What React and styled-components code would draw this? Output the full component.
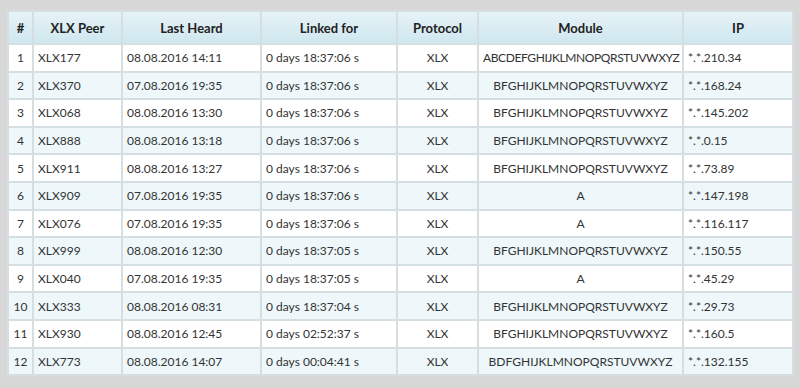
import React from "react";
import styled, { createGlobalStyle } from "styled-components";

const GlobalStyle = createGlobalStyle`
  html, body {
    margin: 0;
    padding: 0;
    background: #d7d7d7;
  }
  body {
    font-family: Lato, "Open Sans", "Liberation Sans", sans-serif;
    color: #333;
  }
`;

const peers = [
  ["XLX177", "08.08.2016 14:11", "0 days 18:37:06 s", "XLX", "ABCDEFGHIJKLMNOPQRSTUVWXYZ", "*.*.210.34"],
  ["XLX370", "07.08.2016 19:35", "0 days 18:37:06 s", "XLX", "BFGHIJKLMNOPQRSTUVWXYZ", "*.*.168.24"],
  ["XLX068", "08.08.2016 13:30", "0 days 18:37:06 s", "XLX", "BFGHIJKLMNOPQRSTUVWXYZ", "*.*.145.202"],
  ["XLX888", "08.08.2016 13:18", "0 days 18:37:06 s", "XLX", "BFGHIJKLMNOPQRSTUVWXYZ", "*.*.0.15"],
  ["XLX911", "08.08.2016 13:27", "0 days 18:37:06 s", "XLX", "BFGHIJKLMNOPQRSTUVWXYZ", "*.*.73.89"],
  ["XLX909", "07.08.2016 19:35", "0 days 18:37:06 s", "XLX", "A", "*.*.147.198"],
  ["XLX076", "07.08.2016 19:35", "0 days 18:37:06 s", "XLX", "A", "*.*.116.117"],
  ["XLX999", "08.08.2016 12:30", "0 days 18:37:05 s", "XLX", "BFGHIJKLMNOPQRSTUVWXYZ", "*.*.150.55"],
  ["XLX040", "07.08.2016 19:35", "0 days 18:37:05 s", "XLX", "A", "*.*.45.29"],
  ["XLX333", "08.08.2016 08:31", "0 days 18:37:04 s", "XLX", "BFGHIJKLMNOPQRSTUVWXYZ", "*.*.29.73"],
  ["XLX930", "08.08.2016 12:45", "0 days 02:52:37 s", "XLX", "BFGHIJKLMNOPQRSTUVWXYZ", "*.*.160.5"],
  ["XLX773", "08.08.2016 14:07", "0 days 00:04:41 s", "XLX", "BDFGHIJKLMNOPQRSTUVWXYZ", "*.*.132.155"],
];

const columns = [
  { title: "#", width: 25, align: "center" },
  { title: "XLX Peer", width: 89, align: "left" },
  { title: "Last Heard", width: 139, align: "left" },
  { title: "Linked for", width: 136, align: "left" },
  { title: "Protocol", width: 81, align: "center" },
  { title: "Module", width: 205, align: "center" },
  { title: "IP", width: 110, align: "left" },
];

export default function App() {
  return (
    <>
      <GlobalStyle />
      <Page>
        <Table>
          <colgroup>
            {columns.map((c) => (
              <col key={c.title} style={{ width: c.width }} />
            ))}
          </colgroup>
          <thead>
            <tr>
              {columns.map((c) => (
                <HeaderCell key={c.title}>{c.title}</HeaderCell>
              ))}
            </tr>
          </thead>
          <tbody>
            {peers.map((p, i) => (
              <Row key={p[0]} $even={i % 2 === 1}>
                <Cell $align="center">{i + 1}</Cell>
                {p.map((v, j) => (
                  <Cell
                    key={j}
                    $align={columns[j + 1].align}
                    $tight={v.length > 24}
                  >
                    {v}
                  </Cell>
                ))}
              </Row>
            ))}
          </tbody>
        </Table>
      </Page>
    </>
  );
}

const Page = styled.div`
  width: 800px;
  height: 388px;
  padding: 10px 0 0 7px;
  box-sizing: border-box;
`;

const Table = styled.table`
  table-layout: fixed;
  width: 786px;
  border-collapse: collapse;
  font-size: 12px;
`;

const HeaderCell = styled.th`
  height: 31px;
  padding: 0 4px;
  font-size: 13px;
  font-weight: 700;
  color: #222;
  text-align: center;
  background: linear-gradient(#e6f3f7, #cfe7ef);
  border: 2px solid #d5dfe2;
`;

const Row = styled.tr`
  background: ${(p) => (p.$even ? "#eef7fa" : "#ffffff")};
`;

const Cell = styled.td`
  height: 25.6px;
  padding: 0 4px;
  text-align: ${(p) => p.$align};
  letter-spacing: ${(p) => (p.$tight ? "-0.4px" : "normal")};
  white-space: nowrap;
  overflow: hidden;
  border: 2px solid #d5dfe2;
`;
